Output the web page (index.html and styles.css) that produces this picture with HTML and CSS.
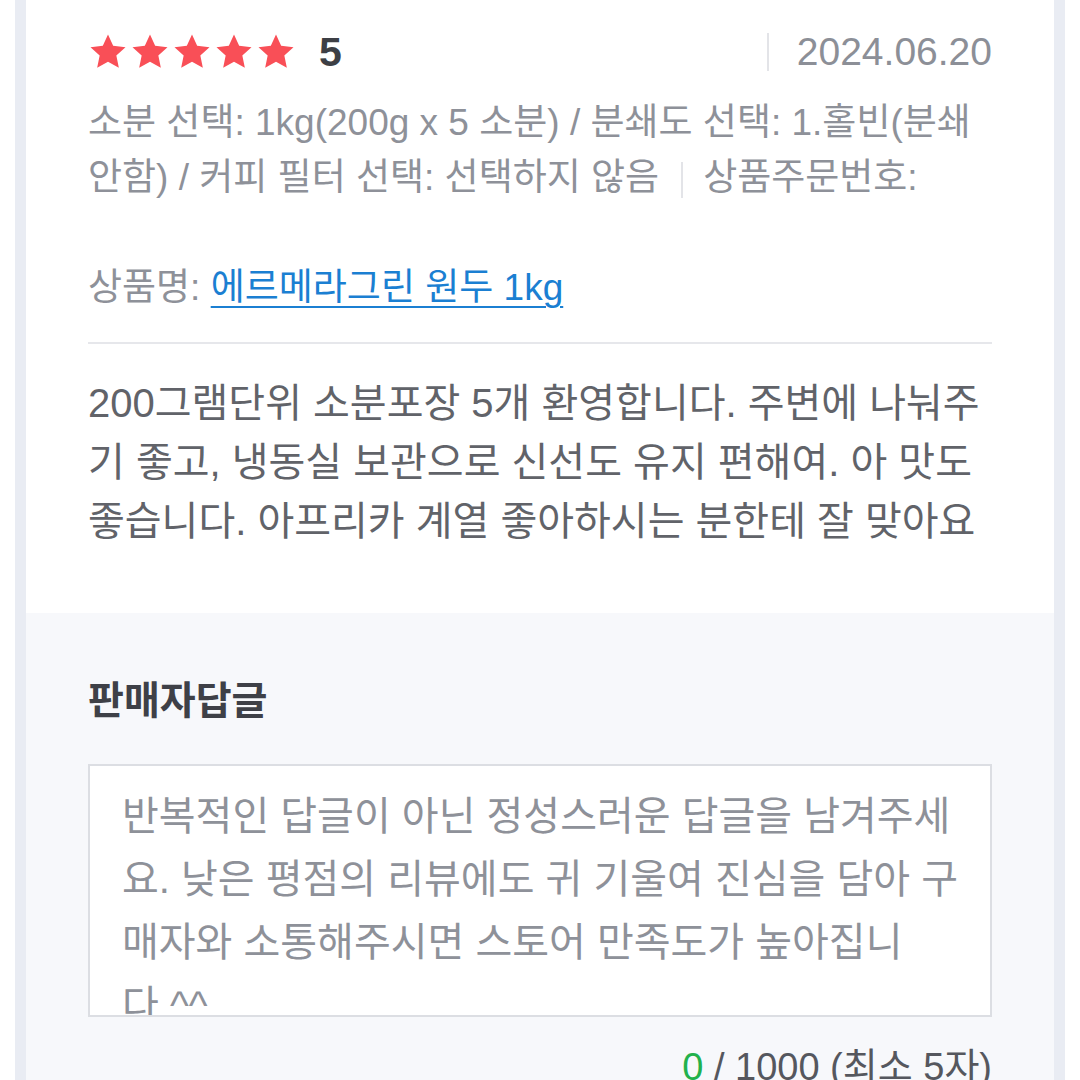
FILE: index.html
```html
<!DOCTYPE html>
<html lang="ko">
<head>
  <meta charset="UTF-8" />
  <meta name="viewport" content="width=device-width, initial-scale=1.0" />
  <title>리뷰 관리</title>
  <link rel="stylesheet" href="styles.css">
</head>
<body>
  <div class="page">
    <!-- Review card -->
    <div class="review">
      <div class="review-head">
        <div class="rating">
          <span class="stars">
            <svg viewBox="0 0 24 24"><polygon points="12,1.5 15.1,8.3 22.5,9.1 17,14.1 18.5,21.5 12,17.8 5.5,21.5 7,14.1 1.5,9.1 8.9,8.3"/></svg>
            <svg viewBox="0 0 24 24"><polygon points="12,1.5 15.1,8.3 22.5,9.1 17,14.1 18.5,21.5 12,17.8 5.5,21.5 7,14.1 1.5,9.1 8.9,8.3"/></svg>
            <svg viewBox="0 0 24 24"><polygon points="12,1.5 15.1,8.3 22.5,9.1 17,14.1 18.5,21.5 12,17.8 5.5,21.5 7,14.1 1.5,9.1 8.9,8.3"/></svg>
            <svg viewBox="0 0 24 24"><polygon points="12,1.5 15.1,8.3 22.5,9.1 17,14.1 18.5,21.5 12,17.8 5.5,21.5 7,14.1 1.5,9.1 8.9,8.3"/></svg>
            <svg viewBox="0 0 24 24"><polygon points="12,1.5 15.1,8.3 22.5,9.1 17,14.1 18.5,21.5 12,17.8 5.5,21.5 7,14.1 1.5,9.1 8.9,8.3"/></svg>
          </span>
          <span class="score">5</span>
        </div>
        <div class="date">2024.06.20</div>
      </div>

      <p class="options">
        소분 선택: 1kg(200g x 5 소분) / 분쇄도 선택: 1.홀빈(분쇄 안함) / 커피 필터 선택: 선택하지 않음<span class="sep"></span>상품주문번호:
      </p>
      <p class="product">상품명: <a href="#">에르메라그린 원두 1kg </a></p>

      <div class="review-body">
        200그램단위 소분포장 5개 환영합니다. 주변에 나눠주기 좋고, 냉동실 보관으로 신선도 유지 편해여. 아 맛도 좋습니다. 아프리카 계열 좋아하시는 분한테 잘 맞아요
      </div>
    </div>

    <!-- Seller reply -->
    <div class="reply">
      <h2>판매자답글</h2>
      <textarea class="reply-input" placeholder="반복적인 답글이 아닌 정성스러운 답글을 남겨주세&#10;요. 낮은 평점의 리뷰에도 귀 기울여 진심을 담아 구&#10;매자와 소통해주시면 스토어 만족도가 높아집니&#10;다 ^^"></textarea>
      <div class="counter"><span class="count">0</span> / 1000 (최소 5자)</div>
    </div>
  </div>
</body>
</html>
```

FILE: styles.css
```css
/* Global */
body {
  margin: 0;
  padding: 0;
  background: #fff;
  font-family: "Liberation Sans", "Noto Sans CJK KR", sans-serif;
  color: #55575e;
}
.page {
  margin: 0 15px;
  padding: 0 11px;
  background: #e9ecf3;
  min-height: 1080px;
}

/* Review card */
.review {
  background: #fff;
  padding: 28px 62px 62px;
}
.review-head {
  display: flex;
  align-items: center;
  justify-content: space-between;
  height: 48px;
}
.rating {
  display: flex;
  align-items: center;
}
.stars {
  display: flex;
  gap: 2px;
}
.stars svg {
  width: 40px;
  height: 40px;
  fill: #f94f57;
}
.score {
  margin-left: 23px;
  font-size: 41px;
  font-weight: 700;
  color: #3d3f45;
}
.date {
  display: flex;
  align-items: center;
  font-size: 39px;
  color: #8c8f97;
}
.date::before {
  content: "";
  width: 2px;
  height: 38px;
  margin-right: 28px;
  background: #e3e4e8;
}
.options,
.product {
  margin: 0;
  font-size: 37px;
  line-height: 55px;
  color: #8e9199;
  word-break: break-all;
}
.options {
  margin-top: 19px;
}
.sep {
  display: inline-block;
  width: 2px;
  height: 36px;
  margin: 0 20px 0 22px;
  vertical-align: -8px;
  background: #e3e4e8;
}
.product {
  margin-top: 55px;
  padding-bottom: 27px;
  border-bottom: 2px solid #e6e7eb;
}
.product a {
  color: #1b7fd2;
  text-decoration: underline;
  text-underline-offset: 6px;
  text-decoration-thickness: 2px;
}
.review-body {
  margin-top: 30px;
  font-size: 40px;
  line-height: 59px;
  color: #616369;
  word-break: break-all;
}

/* Seller reply */
.reply {
  background: #f7f8fb;
  padding: 66px 62px 40px;
}
.reply h2 {
  margin: 0;
  font-size: 39px;
  line-height: 44px;
  font-weight: 700;
  color: #3e4047;
}
.reply-input {
  display: block;
  box-sizing: border-box;
  width: 100%;
  height: 253px;
  margin-top: 41px;
  padding: 19px 14px 19px 32px;
  border: 2px solid #dcdee3;
  border-radius: 0;
  background: #fff;
  font-family: inherit;
  font-size: 40px;
  line-height: 63px;
  color: #55575e;
  word-break: break-all;
  resize: none;
  overflow: hidden;
  outline: none;
}
.reply-input::placeholder {
  color: #8e9199;
}
.counter {
  margin-top: 28px;
  text-align: right;
  font-size: 38px;
  line-height: 44px;
  color: #55575e;
}
.count {
  color: #22b14c;
}
```
